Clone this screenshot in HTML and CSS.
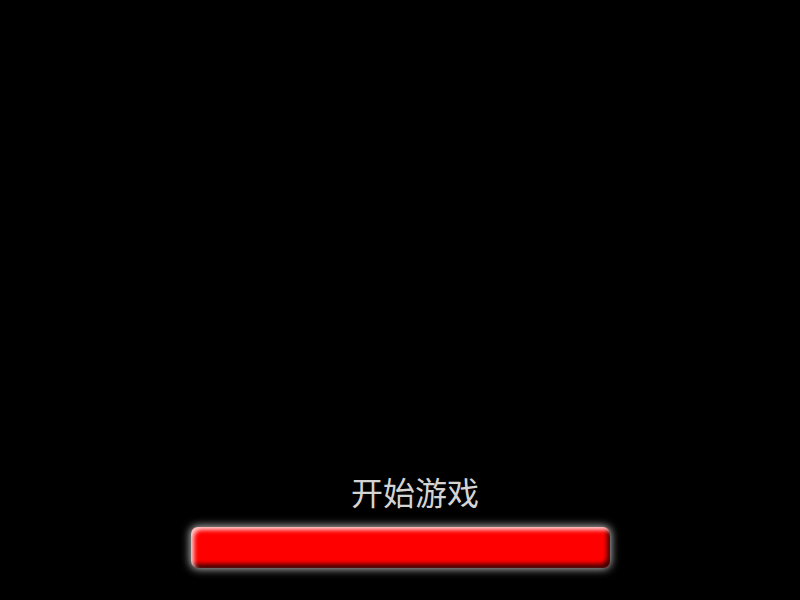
FILE: index.html
```html
<!DOCTYPE html>
<html lang="zh-CN">
<head>
<meta charset="utf-8">
<title>开始游戏</title>
<link rel="stylesheet" href="styles.css">
</head>
<body>
<div class="screen">
  <div class="title">开始游戏</div>
  <div class="bar"></div>
</div>
</body>
</html>
```
FILE: styles.css
```css
html, body {
  margin: 0;
  padding: 0;
  background: #000;
}
.screen {
  width: 800px;
  height: 600px;
  box-sizing: border-box;
  display: flex;
  flex-direction: column;
  align-items: center;
  justify-content: flex-end;
  padding-bottom: 32px;
}
.title {
  font-family: "Noto Sans CJK SC", "Noto Sans", sans-serif;
  font-size: 32px;
  font-weight: 400;
  line-height: 32px;
  color: #d4d4d4;
  padding-left: 30px;
  margin-bottom: 20px;
}
.bar {
  width: 419px;
  height: 41px;
  border-radius: 7px;
  background: #ff0000;
  box-shadow:
    0 0 9px 1px rgba(255, 255, 255, 0.75),
    inset 3px 3px 4px rgba(255, 255, 255, 0.8),
    inset -3px -4px 4px rgba(0, 0, 0, 0.75);
}
```
